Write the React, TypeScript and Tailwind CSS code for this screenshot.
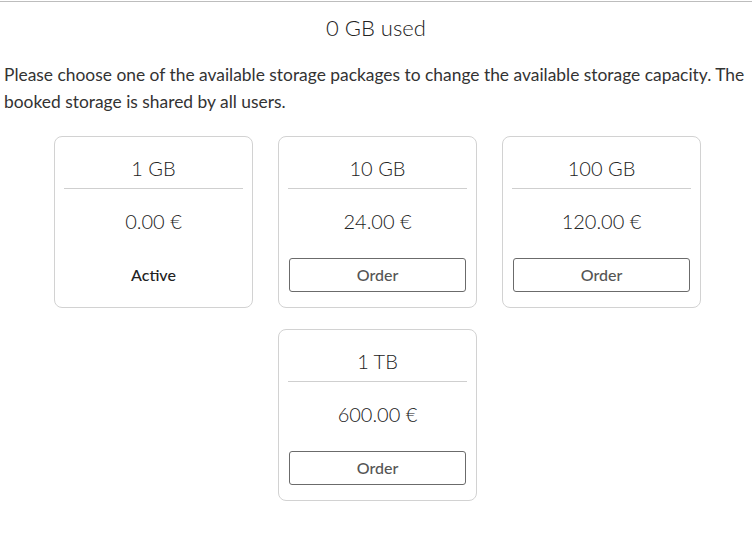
type Pkg = {
  size: string;
  price: string;
  active?: boolean;
};

const rows: Pkg[][] = [
  [
    { size: "1 GB", price: "0.00 €", active: true },
    { size: "10 GB", price: "24.00 €" },
    { size: "100 GB", price: "120.00 €" },
  ],
  [{ size: "1 TB", price: "600.00 €" }],
];

function PackageCard({ pkg }: { pkg: Pkg }) {
  return (
    <div className="w-[199px] rounded-[8px] border border-[#d2d2d2] bg-white px-[9px] pb-[15px] text-center">
      <div className="border-b border-[#cfcfcf] pt-[17px] pb-[6px] text-[20px] leading-[28px] font-light text-[#222]">
        {pkg.size}
      </div>
      <div className="mt-[18px] text-[20px] leading-[28px] font-light text-[#222]">
        {pkg.price}
      </div>
      {pkg.active ? (
        <div className="mt-[23px] flex h-[34px] items-center justify-center text-[16px] font-medium text-[#222]">
          Active
        </div>
      ) : (
        <button
          type="button"
          className="mx-[1px] mt-[23px] flex h-[34px] w-[calc(100%-2px)] items-center justify-center rounded-[3px] border border-[#6b6b6b] bg-white text-[16px] font-medium text-[#555]"
        >
          Order
        </button>
      )}
    </div>
  );
}

export default function App() {
  return (
    <div className="min-h-[534px] w-[752px] bg-white font-['Lato',sans-serif]">
      <div className="pt-px">
        <div className="h-px bg-[#bdbdbd]" />
      </div>
      <h1 className="mt-[10px] text-center text-[22px] leading-[32px] font-light text-[#222]">
        0 GB used
      </h1>
      <p className="mt-[17px] px-[4px] text-[17.4px] leading-[27px] text-[#333]">
        Please choose one of the available storage packages to change the available storage capacity. The
        <br />
        booked storage is shared by all users.
      </p>
      <div className="mt-[21px] flex flex-col items-center gap-[21px] pl-[3px]">
        {rows.map((row, i) => (
          <div key={i} className="flex gap-[25px]">
            {row.map((pkg) => (
              <PackageCard key={pkg.size} pkg={pkg} />
            ))}
          </div>
        ))}
      </div>
    </div>
  );
}
